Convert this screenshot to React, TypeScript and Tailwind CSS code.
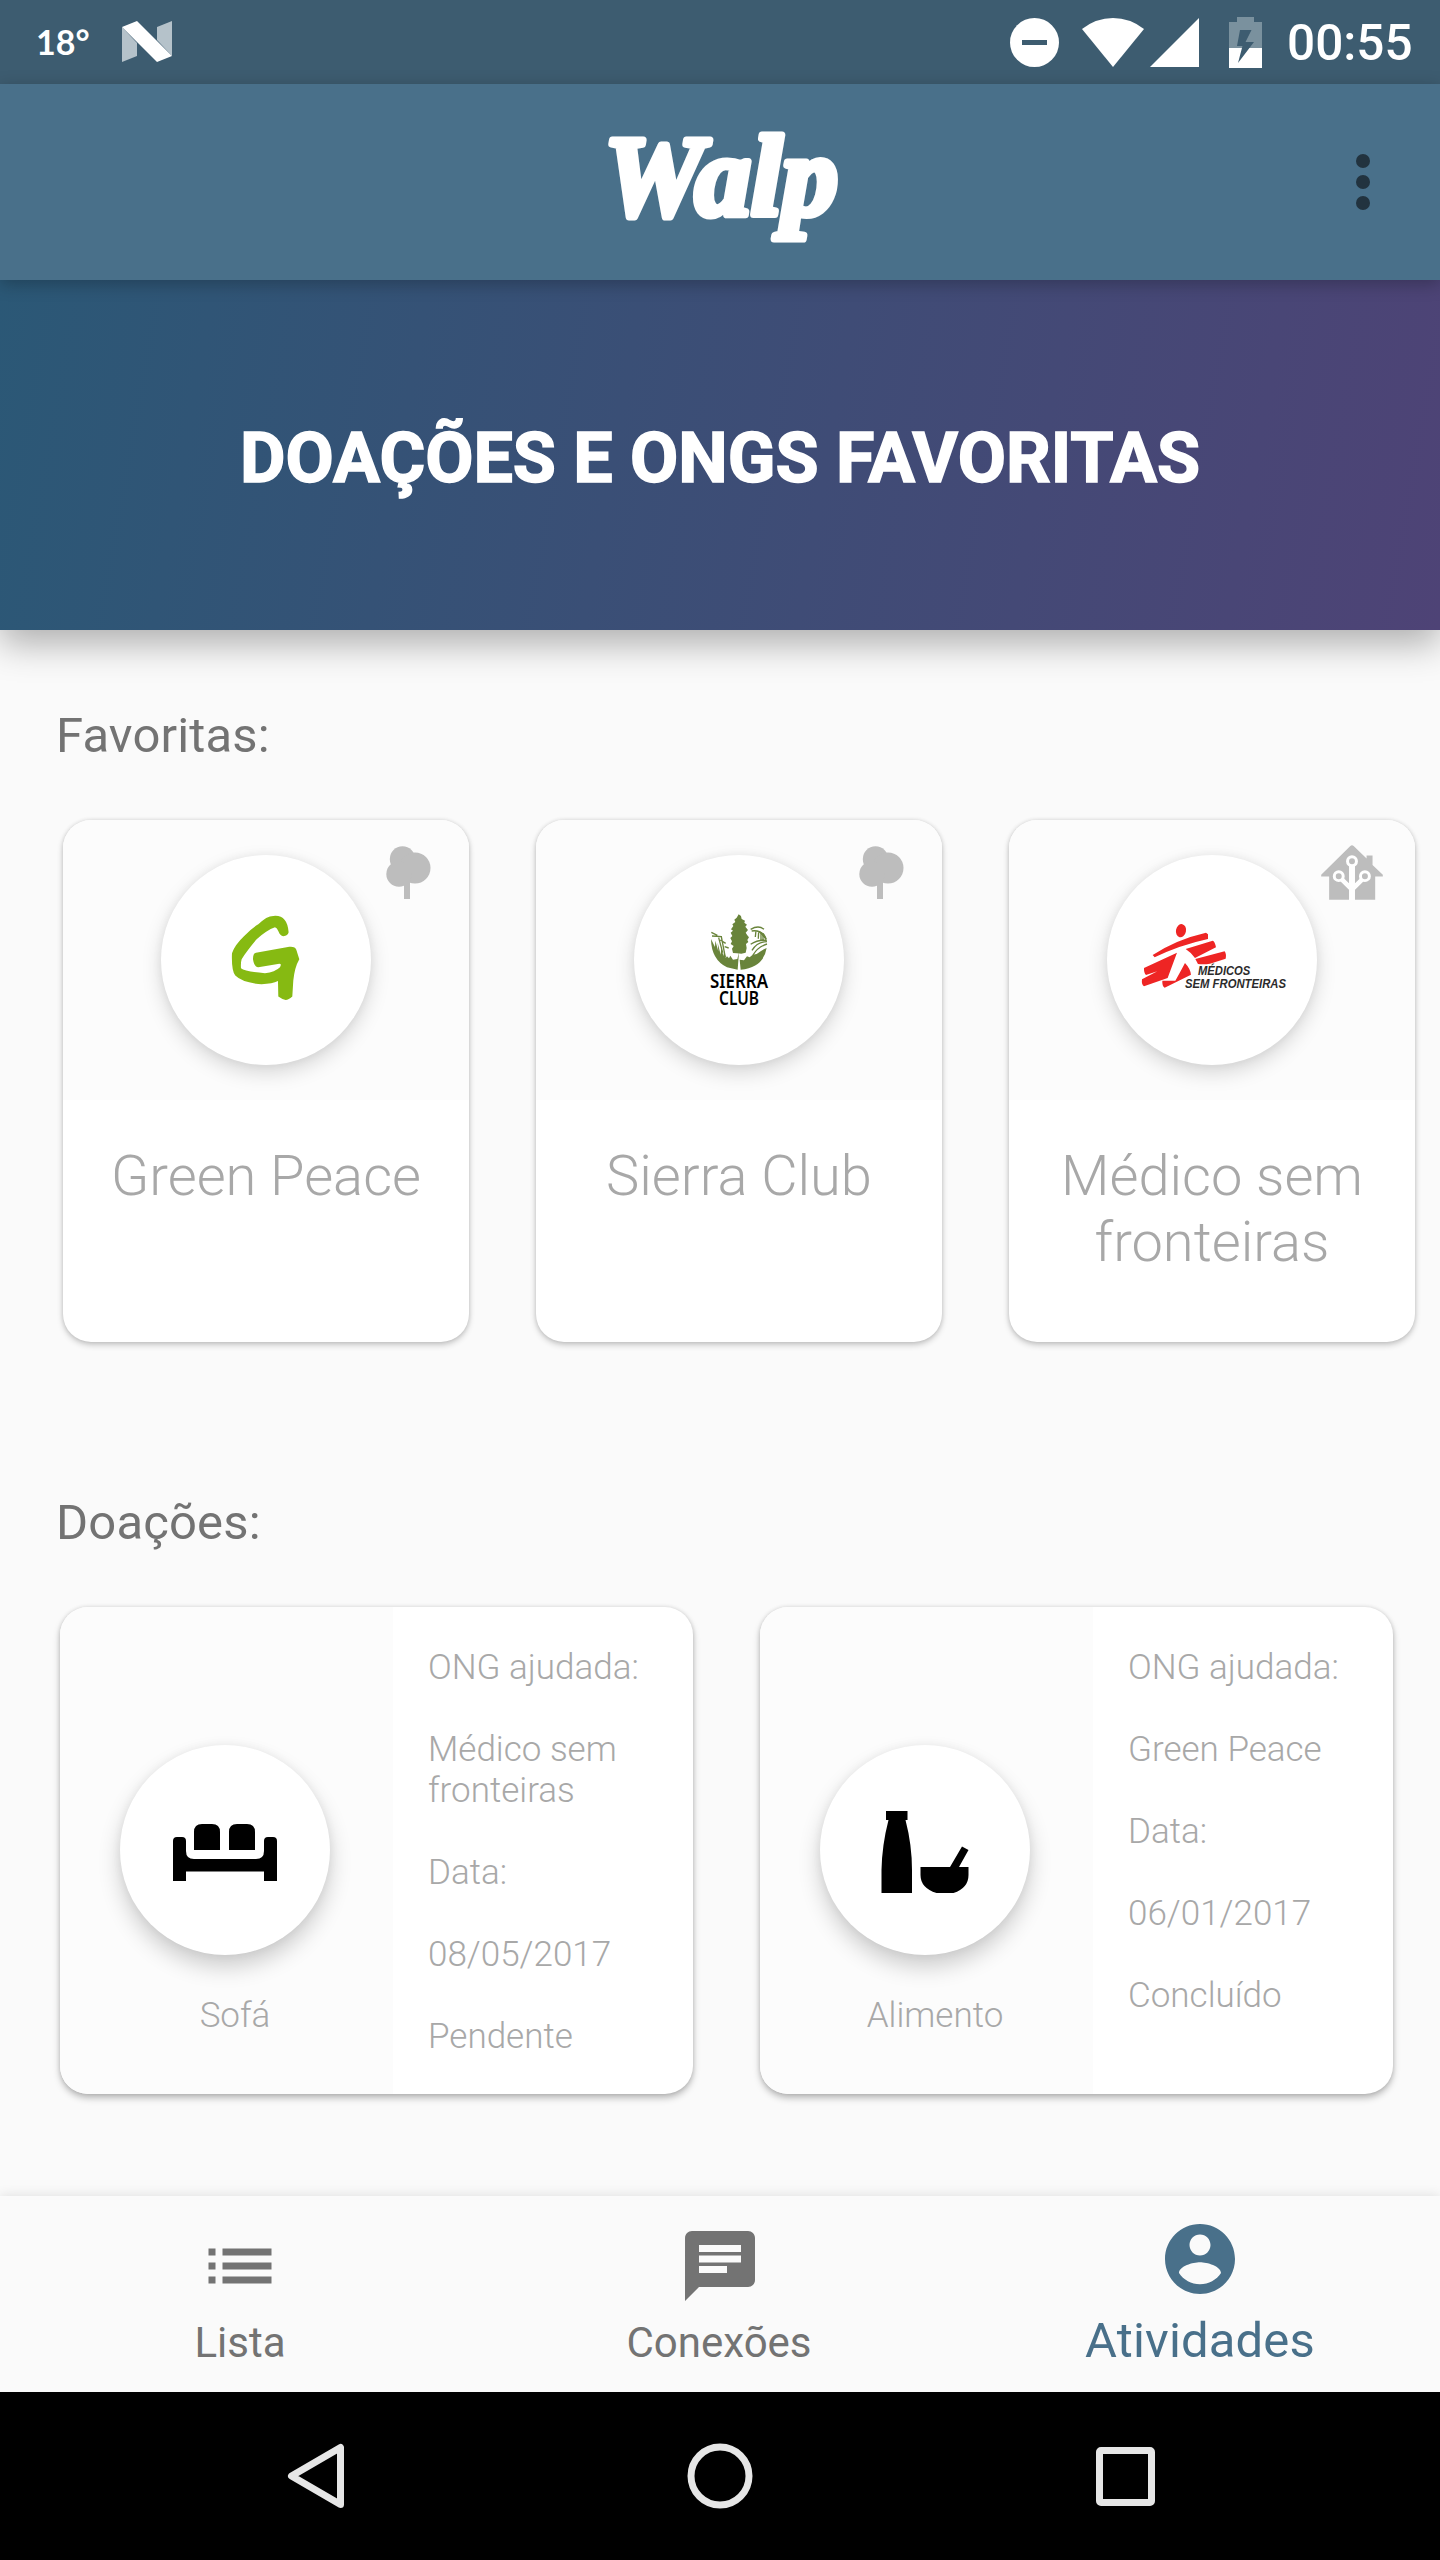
import type { ReactNode } from "react";

function StatusBar() {
  return (
    <div className="flex h-[84px] items-center bg-[#3d5c70] pl-[36px] pr-[28px] text-white">
      <span className="w-[86px] font-['Lato'] text-[34px] font-bold leading-none">18°</span>
      <svg width="50" height="42" viewBox="0 0 50 42">
        <path d="M0 6 15 22V35L0 41Z M35 6 50 0V35L35 19Z" fill="#b5c2ca" />
        <path d="M0 6 15 0 50 35 35 41Z" fill="#fff" />
      </svg>
      <div className="ml-auto flex items-center">
        <svg width="49" height="49" viewBox="0 0 49 49">
          <circle cx="24.5" cy="24.5" r="24.5" fill="#fff" />
          <path d="M12 22h25v5H12z" fill="#3d5c70" />
        </svg>
        <svg className="ml-[23px]" width="62" height="49" viewBox="0 0 62 49">
          <path d="M0 11Q14 0 31 0T62 11L31 49Z" fill="#fff" />
        </svg>
        <svg className="ml-[6px]" width="49" height="49" viewBox="0 0 49 49">
          <path d="M49 0V49H0Z" fill="#fff" />
        </svg>
        <svg className="ml-[30px]" width="33" height="51" viewBox="0 0 33 51">
          <path d="M0 5h8V0h17v5h8v26H0z" fill="#7a919e" />
          <path d="M0 31h33v20H0z" fill="#fff" />
          <path d="M11 13h11.500l-6 12H25L9 46l4.500-17H8z" fill="#3d5c70" />
        </svg>
        <span className="ml-[25px] mt-[3px] w-[125px] text-[49.500px] font-medium leading-[57px]">00:55</span>
      </div>
    </div>
  );
}

function Toolbar() {
  return (
    <header className="relative z-20 grid h-[196px] grid-cols-[1fr_240px_1fr] items-center bg-[#49708a] shadow-[0_4px_16px_rgba(0,0,0,0.25)]">
      <span />
      <svg className="overflow-visible" width="240" height="130" viewBox="0 0 240 130">
        <text
          x="4"
          y="98"
          fill="#fff"
          stroke="#fff"
          strokeWidth="7"
          strokeLinejoin="round"
          fontFamily="Liberation Serif, serif"
          fontStyle="italic"
          fontWeight="700"
          fontSize="115"
          textLength="234"
          lengthAdjust="spacingAndGlyphs"
        >
          Walp
        </text>
      </svg>
      <div className="flex flex-col gap-[7px] justify-self-end pr-[70px]">
        <i className="size-[14px] rounded-full bg-[#22333f]" />
        <i className="size-[14px] rounded-full bg-[#22333f]" />
        <i className="size-[14px] rounded-full bg-[#22333f]" />
      </div>
    </header>
  );
}

function TreeIcon() {
  return (
    <svg width="45" height="54" viewBox="0 0 45 54" fill="#bdbdbd">
      <circle cx="16.500" cy="13" r="12.700" />
      <circle cx="29" cy="22" r="15.500" />
      <circle cx="13" cy="28" r="12.700" />
      <path d="M18 30h6v23h-6z" />
    </svg>
  );
}

function HouseIcon() {
  return (
    <svg width="62" height="55" viewBox="723 43 186 166">
      <path d="M811 46q5-4 10 0l39 38V75h18v28l31 30v5h-23v70H747v-70h-24v-5z" fill="#bdbdbd" />
      <g stroke="#fff" fill="none">
        <path d="M816 105v104" strokeWidth="18" />
        <path d="M785 147l31 30 31-30" strokeWidth="14" />
        <g fill="#bdbdbd" strokeWidth="9">
          <circle cx="816" cy="92" r="13.500" />
          <circle cx="776" cy="137" r="13.500" />
          <circle cx="855" cy="137" r="13.500" />
        </g>
      </g>
    </svg>
  );
}

function GreenpeaceLogo() {
  return (
    <svg width="210" height="210" viewBox="0 0 210 210">
      <path
        transform="translate(-161 -255) scale(.3333 .4975)"
        fill="#86ba12"
        d="M866 668Q864 675 850 676Q840 675 836 667Q831 659 825 658Q800 664 770 682Q740 706 725 722Q722 728 723 740Q735 747 795 750Q825 748 840 738Q846 731 838 731L775 738Q763 738 759 722Q759 710 768 709L868 697Q886 696 889 703L898 722Q884 738 880 765L877 797Q866 804 857 804Q845 802 835 797L834 766Q815 773 775 772Q725 768 706 755Q694 745 696 710Q705 693 732 676Q755 660 775 652Q800 635 820 635Q862 632 866 668Z"
      />
    </svg>
  );
}

function SierraLogo() {
  return (
    <svg width="210" height="210" viewBox="0 0 210 210">
      <g transform="translate(26 25) scale(.3333)" fill="#69843b">
        <path d="M236 103L243 108 245 117 255 122 253 128 261 134 256 140 264 150 257 158 262 166 267 172 262 180 265 186 258 192 260 204 257 218 244 221 231 220 219 219 216 206 221 198 212 192 216 184 211 174 217 168 212 158 219 152 213 148 220 138 217 133 226 126 223 119 230 113Z" />
        <path d="M153 177q1 62 48 85l32 7 4-52-5 20-13 2-8-12-4 8-6-6-4 5-4-22-3 16-6-28-2 24-9-36 2 26-9-32-1 19z" />
        <path d="M320 204q-9 58-78 65l-3-30 13 2 9-12 8 3 9-8 12-2q17-13 30-18z" />
        <path
          d="M154 157l18 9M156 168l28 2 12 62M176 173l12 45M181 180l16 10M272 148q24-14 40 0M275 153q22-4 36 12l8 12M288 151l-2 20M296 154l-1 22M303 158v22M309 163v18M272 193q20-14 48-12M276 211q16-26 45-26M279 225q14-24 42-33M194 200l12 4"
          fill="none"
          stroke="#69843b"
          strokeWidth="4"
        />
        <path d="M291 152q28 2 29 34-10-20-29-34z" />
        <g fill="#000" fontFamily="Noto Sans, sans-serif" fontWeight="600" fontSize="58">
          <text x="150" y="323" textLength="174" lengthAdjust="spacingAndGlyphs">SIERRA</text>
          <text x="177" y="374" textLength="120" lengthAdjust="spacingAndGlyphs">CLUB</text>
        </g>
      </g>
    </svg>
  );
}

function MsfLogo() {
  return (
    <svg width="210" height="210" viewBox="0 0 210 210">
      <g transform="translate(-27 -25) scale(.3333)" fill="#ee2524">
        <ellipse cx="303" cy="302" rx="15" ry="20" transform="rotate(12 303 302)" />
        <path d="M218 375Q290 328 378 308L384 313V327Q300 345 224 382Z" />
        <path d="M317 357L398 332Q404 332 408 352L345 384Q334 368 317 357Z" />
        <path d="M346 387L434 364Q440 372 437 386L390 401Q372 404 354 402Z" />
        <path d="M192 414L291 368 263 444 192 469Q184 464 186 448L232 424 198 435Q191 428 192 414Z" />
        <path d="M315 399Q331 416 333 434L254 473Q246 468 247 452L286 452Q296 435 315 399Z" />
        <g fill="#2b2b2b" fontFamily="Liberation Sans, sans-serif" fontWeight="700" fontStyle="italic" fontSize="36">
          <text x="354" y="435" textLength="157" lengthAdjust="spacingAndGlyphs">MÉDICOS</text>
          <text x="315" y="473" textLength="303" lengthAdjust="spacingAndGlyphs">SEM FRONTEIRAS</text>
        </g>
      </g>
    </svg>
  );
}

function SofaIcon() {
  return (
    <svg width="210" height="210" viewBox="0 0 210 210">
      <path d="M74 105V87q0-8 8-8h10q8 0 8 8v18zM109 105V87q0-8 8-8h10q8 0 8 8v18zM53 136V96q0-4 4-4h5q4 0 4 4v10q0 8 8 8h62q8 0 8-8V96q0-4 4-4h5q4 0 4 4v40h-13v-9.500H66v9.500z" />
    </svg>
  );
}

function FoodIcon() {
  return (
    <svg width="210" height="210" viewBox="0 0 210 210">
      <path d="M66 66h21.500v9H85.500Q92 100 92 125v23H61.500v-23Q62 100 68.500 75H66zM100.500 122H130l12-20.500 6.500 3.500-9.500 17h9.500v8q0 13-15 18h-17q-16-5-16-18z" />
    </svg>
  );
}

function Disc({ children, strong }: { children: ReactNode; strong?: boolean }) {
  return (
    <div
      className={
        strong
          ? "size-[210px] shrink-0 rounded-full bg-white shadow-[0_12px_22px_rgba(0,0,0,0.19),0_0_10px_rgba(0,0,0,0.06)]"
          : "size-[210px] shrink-0 rounded-full bg-white shadow-[0_8px_20px_rgba(0,0,0,0.15),0_0_10px_rgba(0,0,0,0.06)]"
      }
    >
      {children}
    </div>
  );
}

const favorites = [
  { name: "Green Peace", logo: <GreenpeaceLogo />, icon: <TreeIcon />, wide: false },
  { name: "Sierra Club", logo: <SierraLogo />, icon: <TreeIcon />, wide: false },
  { name: "Médico sem fronteiras", logo: <MsfLogo />, icon: <HouseIcon />, wide: true },
];

const donations = [
  { item: "Sofá", icon: <SofaIcon />, details: ["ONG ajudada:", "Médico sem fronteiras", "Data:", "08/05/2017", "Pendente"] },
  { item: "Alimento", icon: <FoodIcon />, details: ["ONG ajudada:", "Green Peace", "Data:", "06/01/2017", "Concluído"] },
];

function SystemNav() {
  return (
    <div className="flex h-[168px] items-center bg-black pl-[287px]">
      <svg width="58" height="66" viewBox="0 0 58 66" fill="none" stroke="#e6e6e6" strokeWidth="7" strokeLinejoin="round">
        <path d="M53.500 4.500v57L4.500 33z" />
      </svg>
      <svg className="ml-[342px]" width="66" height="66" viewBox="0 0 66 66" fill="none" stroke="#e6e6e6" strokeWidth="7">
        <circle cx="33" cy="33" r="29" />
      </svg>
      <span className="ml-[343px] size-[59px] rounded-[5px] border-[7px] border-[#e6e6e6]" />
    </div>
  );
}

export default function App() {
  return (
    <div className="flex h-[2560px] w-[1440px] flex-col overflow-hidden bg-[#fafafa] font-['Roboto',sans-serif]">
      <StatusBar />
      <Toolbar />
      <div className="relative z-10 flex h-[350px] items-center justify-center bg-linear-[100deg] from-[#2b5876] to-[#4e4376] shadow-[0_14px_34px_rgba(0,0,0,0.3)]">
        <h1 className="pt-[6px] text-[70px] font-bold leading-[82px] text-white [-webkit-text-stroke:1.5px_white]">DOAÇÕES E ONGS FAVORITAS</h1>
      </div>

      <main className="flex-1">
        <h2 className="mt-[77px] pl-[56px] text-[49px] leading-[57px] tracking-[0.15px] text-[#737373]">Favoritas:</h2>
        <div className="mt-[56px] flex gap-[67px] pl-[63px]">
          {favorites.map((f) => (
            <article
              key={f.name}
              className="relative h-[522px] w-[406px] shrink-0 overflow-clip rounded-[28px] bg-white shadow-[0_3px_6px_rgba(0,0,0,0.2),0_0_4px_rgba(0,0,0,0.12)]"
            >
              <div className="flex h-[280px] items-center justify-center bg-[#fcfcfc]">
                <Disc>{f.logo}</Disc>
              </div>
              <div className={f.wide ? "absolute right-[32px] top-[25px]" : "absolute right-[38px] top-[26px]"}>{f.icon}</div>
              <p className="mt-[43px] px-[35px] text-center text-[56px] font-light leading-[66px] text-[#a8a8a8]">{f.name}</p>
            </article>
          ))}
        </div>

        <h2 className="mt-[152px] pl-[56px] text-[49px] leading-[57px] tracking-[0.15px] text-[#737373]">Doações:</h2>
        <div className="mt-[56px] flex gap-[67px] pl-[60px]">
          {donations.map((d) => (
            <article
              key={d.item}
              className="flex h-[487px] w-[633px] shrink-0 overflow-clip rounded-[28px] bg-white shadow-[0_4px_7px_rgba(0,0,0,0.26),0_0_4px_rgba(0,0,0,0.12)]"
            >
              <div className="w-[333px] bg-[#fcfcfc] pl-[60px] pt-[138px]">
                <Disc strong>{d.icon}</Disc>
                <p className="mt-[40px] w-[230px] text-center text-[35px] font-light leading-[41px] text-[#a8a8a8]">{d.item}</p>
              </div>
              <div className="flex w-[300px] flex-col gap-[41px] pl-[35px] pr-[30px] pt-[40px] text-[35px] font-light leading-[41px] text-[#a8a8a8]">
                {d.details.map((line) => (
                  <p key={line}>{line}</p>
                ))}
              </div>
            </article>
          ))}
        </div>
      </main>

      <nav className="grid h-[196px] grid-cols-3 justify-items-center bg-[#fafafa] text-[#737373] shadow-[0_0_12px_rgba(0,0,0,0.12)]">
        <div className="flex flex-col items-center pt-[28px]">
          <svg width="84" height="84" viewBox="0 0 24 24" fill="currentColor">
            <path d="M3 13h2v-2H3v2zm0 4h2v-2H3v2zm0-8h2V7H3v2zm4 4h14v-2H7v2zm0 4h14v-2H7v2zM7 7v2h14V7H7z" />
          </svg>
          <span className="mt-[10px] text-[42px] leading-[49px]">Lista</span>
        </div>
        <div className="flex flex-col items-center pt-[28px]">
          <svg width="84" height="84" viewBox="0 0 24 24" fill="currentColor">
            <path d="M20 2H4c-1.100 0-1.990.9-1.990 2L2 22l4-4h14c1.100 0 2-.9 2-2V4c0-1.100-.9-2-2-2zM6 9h12v2H6V9zm8 5H6v-2h8v2zm4-6H6V6h12v2z" />
          </svg>
          <span className="mr-[2px] mt-[10px] text-[42px] leading-[49px]">Conexões</span>
        </div>
        <div className="flex flex-col items-center pt-[21px] text-[#49708a]">
          <svg width="84" height="84" viewBox="0 0 24 24" fill="currentColor">
            <path d="M12 2C6.480 2 2 6.480 2 12s4.480 10 10 10 10-4.480 10-10S17.520 2 12 2zm0 3c1.660 0 3 1.340 3 3s-1.340 3-3 3-3-1.340-3-3 1.340-3 3-3zm0 14.200c-2.500 0-4.710-1.280-6-3.220.03-1.990 4-3.080 6-3.080 1.990 0 5.970 1.090 6 3.080-1.290 1.940-3.500 3.220-6 3.220z" />
          </svg>
          <span className="mt-[11px] text-[49px] leading-[57px] tracking-[0.15px]">Atividades</span>
        </div>
      </nav>
      <SystemNav />
    </div>
  );
}
